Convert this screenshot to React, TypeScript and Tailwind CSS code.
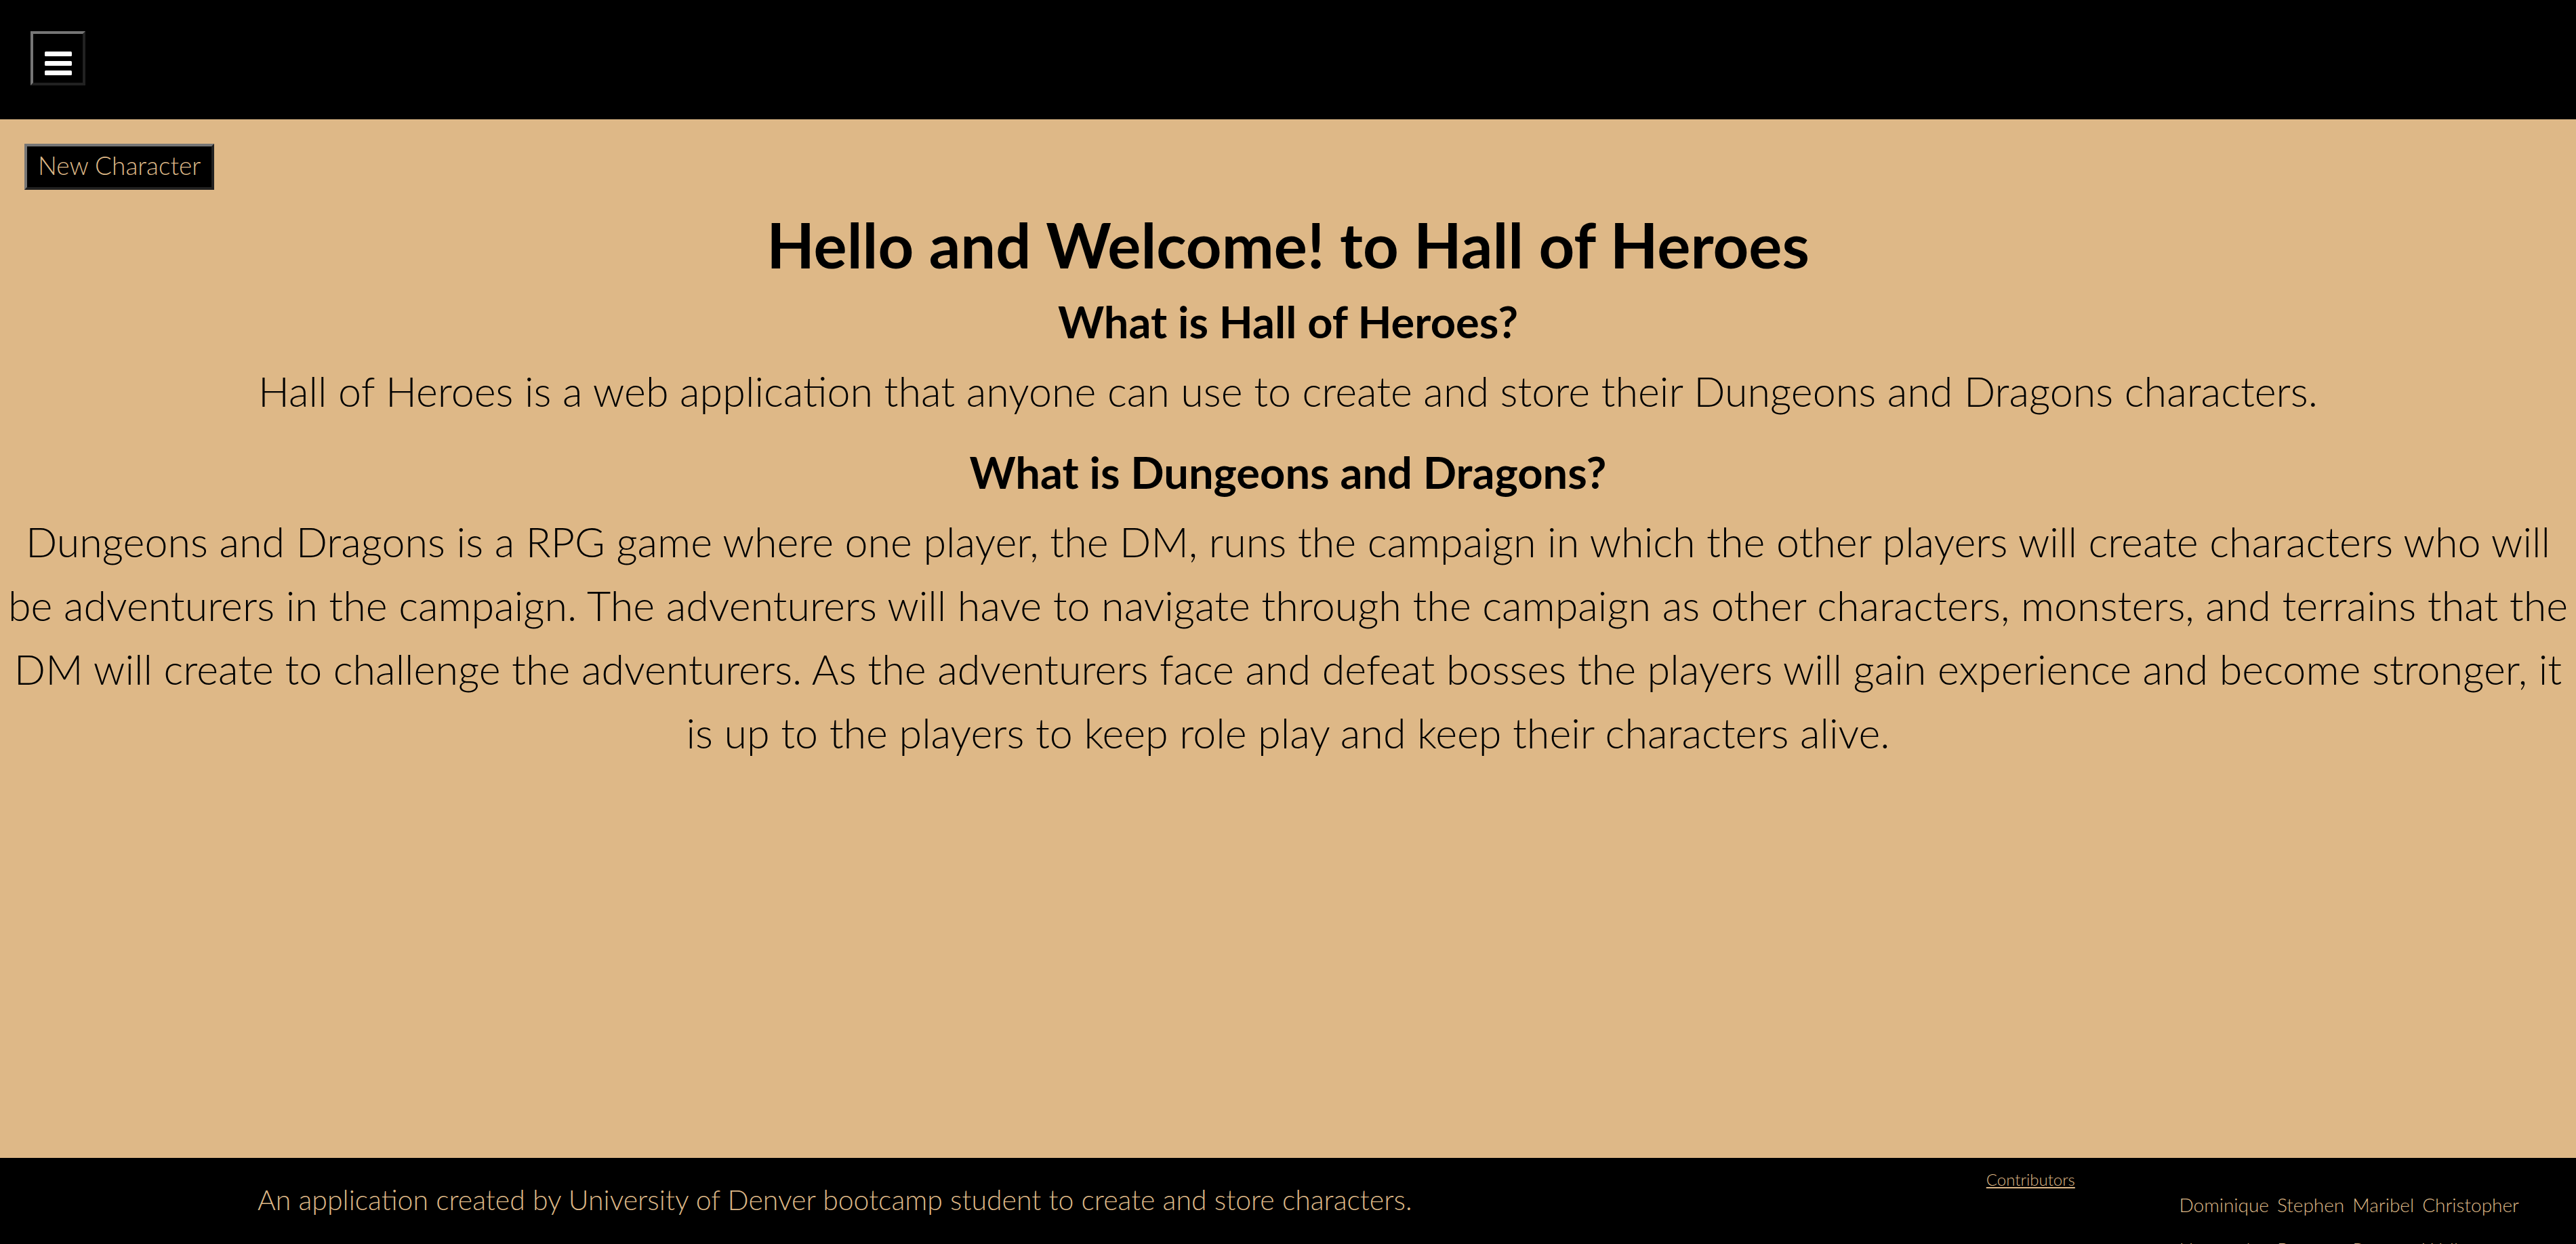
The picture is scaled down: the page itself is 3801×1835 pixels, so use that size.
const paragraph = "mt-2 text-[61px] leading-[94px] font-light";
const subheading = "text-[65px] leading-[96px] font-bold";

const contributors = [
  { first: "Dominique", last: "Hernandez" },
  { first: "Stephen", last: "Rosas" },
  { first: "Maribel", last: "Perez" },
  { first: "Christopher", last: "Walker" },
];

export default function App() {
  return (
    <div className="flex h-screen flex-col overflow-hidden bg-[#deb887] font-[Lato,sans-serif] text-black">
      <header className="flex h-44 shrink-0 items-start bg-black px-[45px] pt-[46px]">
        <button
          type="button"
          aria-label="Open menu"
          className="flex h-20 w-[81px] justify-center border-4 border-t-[#767676] border-r-[#212121] border-b-[#212121] border-l-[#767676] bg-black pt-[26px]"
        >
          <svg viewBox="0 0 40 35" className="h-[35px] w-10 fill-white" aria-hidden="true">
            <rect width="40" height="7" rx="1.5" />
            <rect y="14" width="40" height="7" rx="1.5" />
            <rect y="28" width="40" height="7" rx="1.5" />
          </svg>
        </button>
      </header>

      <main className="min-h-0 grow">
        <div className="px-9 pt-9">
          <button
            type="button"
            className="block border-4 border-t-[#767676] border-r-[#212121] border-b-[#212121] border-l-[#767676] bg-black px-4 pt-1 pb-2 text-[37px] leading-[48px] font-light text-[#deb887]"
          >
            New Character
          </button>
        </div>
        <div className="text-center">
          <h1 className="mt-4 text-[92px] leading-[130px] font-bold">
            Hello and Welcome! to Hall of Heroes
          </h1>
          <h2 className={subheading}>What is Hall of Heroes?</h2>
          <p className={paragraph}>
            Hall of Heroes is a web application that anyone can use to create and store their Dungeons
            and Dragons characters.
          </p>
          <h2 className={`mt-6 ${subheading}`}>What is Dungeons and Dragons?</h2>
          <p className={paragraph}>
            Dungeons and Dragons is a RPG game where one player, the DM, runs the campaign in which
            the other players will create characters who will be adventurers in the campaign. The
            adventurers will have to navigate through the campaign as other characters, monsters, and
            terrains that the DM will create to challenge the adventurers. As the adventurers face and
            defeat bosses the players will gain experience and become stronger, it is up to the
            players to keep role play and keep their characters alive.
          </p>
        </div>
      </main>

      <footer className="flex h-[127px] shrink-0 items-start overflow-hidden bg-black text-[#deb887]">
        <p className="w-[77%] pt-8 pl-[10%] text-[41px] leading-[60px] font-light">
          An application created by University of Denver bootcamp student to create and store characters.
        </p>
        <a href="#contributors" className="ml-1 pt-4 text-[24px] leading-[32px] font-light underline">
          Contributors
        </a>
        <table id="contributors" className="mt-9 mr-[72px] ml-auto text-left text-[28px] leading-[66px] font-light">
          <tbody>
            <tr>
              {contributors.map((c) => (
                <td key={c.first} className="pr-3">
                  {c.first}
                </td>
              ))}
            </tr>
            <tr>
              {contributors.map((c) => (
                <td key={c.last} className="pr-3">
                  {c.last}
                </td>
              ))}
            </tr>
          </tbody>
        </table>
      </footer>
    </div>
  );
}
